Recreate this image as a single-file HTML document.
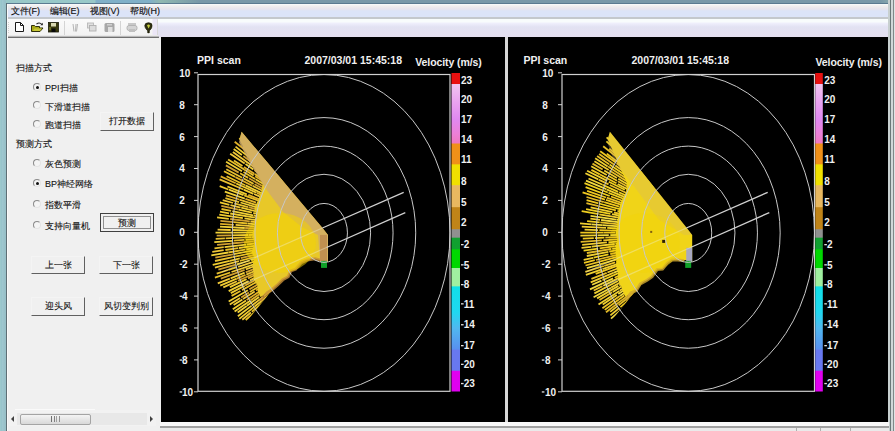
<!DOCTYPE html>
<html><head><meta charset="utf-8"><style>
*{box-sizing:border-box}
body{margin:0;width:895px;height:431px;overflow:hidden;background:#f0f0f0;font-family:"Liberation Sans",sans-serif;position:relative}
.a{position:absolute}
.m{position:absolute;top:6px;font-size:9px;color:#101010;-webkit-text-stroke:0.15px #101010;line-height:11px;white-space:nowrap}
.lbl{position:absolute;font-size:9px;color:#101010;-webkit-text-stroke:0.1px #101010;line-height:10px;white-space:nowrap}
.rad{position:absolute;width:8px;height:8px;border-radius:50%;border:1px solid;border-color:#8a8a8a #e4e4e4 #e4e4e4 #8a8a8a;background:#f4f4f4}
.rad.on::after{content:"";position:absolute;left:1.5px;top:1.5px;width:3px;height:3px;background:#101010;border-radius:50%}
.btn{position:absolute;font-size:9px;color:#101010;-webkit-text-stroke:0.1px #101010;line-height:17px;text-align:center;white-space:nowrap;border-right:1.5px solid #606060;border-bottom:1.5px solid #606060;border-top:1px solid #f4f4f4;border-left:1px solid #f4f4f4;background:#f0f0f0}
svg text.t{font-family:"Liberation Sans",sans-serif;font-size:10px;font-weight:bold;fill:#f0f0f0}
svg text.h{font-family:"Liberation Sans",sans-serif;font-size:10.5px;font-weight:bold;fill:#f0f0f0}
</style></head><body>
<!-- frame top -->
<div class="a" style="left:0;top:0;width:895px;height:4px;background:linear-gradient(90deg,#98c8c8 0,#98c8c8 95px,#80b0c8 96px,#80b0c8 150px,#90b8b0 160px,#7898a8 200px,#7898a8 880px,#90b0b0 895px)"></div>
<div class="a" style="left:0;top:3px;width:895px;height:1px;background:#5a7a90"></div>
<!-- menu bar -->
<div class="a" style="left:6px;top:4px;width:883px;height:13px;background:linear-gradient(#f8fcfc 0,#f0eeee 2px,#e6e4ec 5px,#dce4f8 7px,#dce4f8 13px)"></div>
<div class="a" style="left:6px;top:17px;width:883px;height:2px;background:#c4c8cc"></div>
<!-- rebar -->
<div class="a" style="left:6px;top:19px;width:883px;height:18px;background:linear-gradient(#f8fcfc 0,#f8fcfc 3px,#f0f0fc 4px,#e2e2f2 8px,#e4e0f0 17px)"></div>
<div class="m" style="left:10.5px">文件(F)</div>
<div class="m" style="left:49.5px">编辑(E)</div>
<div class="m" style="left:89.5px">视图(V)</div>
<div class="m" style="left:129.5px">帮助(H)</div>
<!-- toolbar -->
<div class="a" style="left:6px;top:19px;width:152px;height:17px;background:linear-gradient(#fafafa,#f2f2f2);border-right:1px solid #d8d8d8"></div>
<svg class="a" style="left:6px;top:19px" width="153" height="18">
<line x1="2.5" y1="3" x2="2.5" y2="14" stroke="#d0d0d0" stroke-dasharray="1,1"/>
<path d="M9.5,3.5 h5 l3,3 v6 h-8z" fill="#fff" stroke="#181818" stroke-width="1"/>
<path d="M14.5,3.5 v3 h3" fill="none" stroke="#181818" stroke-width="1"/>
<path d="M25.5,6.5 h3 l1,1 h4 v1.5 h3.5 l-3,3.5 h-8.5z" fill="#a8a818" stroke="#30300c" stroke-width="1"/>
<path d="M28.5,9.5 h7.5 l-2.2,2.5 h-7z" fill="#c8c838" stroke="none"/>
<path d="M30.5,5 q3,-2.2 5.5,0.5" fill="none" stroke="#202020" stroke-width="1.1"/><path d="M36.8,3.8 v2.5 h-2.5z" fill="#202020"/>
<rect x="42.5" y="3.5" width="10" height="9.5" fill="#38380c" stroke="#1a1a08" stroke-width="0.8"/>
<rect x="45" y="4" width="5" height="3.5" fill="#d8d8b0"/>
<rect x="45.5" y="9.5" width="4" height="3.5" fill="#080808"/>
<rect x="43.5" y="8" width="1" height="3" fill="#98a040"/>
<line x1="58.5" y1="2" x2="58.5" y2="16" stroke="#d4d4d4"/>
<path d="M67,5 l1,7.5 M70,5 l-0.5,7.5 M71.5,5 l-1,7.5" stroke="#b4b4b4" stroke-width="1"/>
<rect x="81.5" y="4" width="6" height="5" fill="#e0e0e0" stroke="#b8b8b8" stroke-width="0.9"/><rect x="83.5" y="6.5" width="6.5" height="5.5" fill="#dcdcdc" stroke="#b0b0b0" stroke-width="0.9"/>
<rect x="98.5" y="4" width="10" height="9" rx="1.5" fill="#a8a8a8"/><rect x="101" y="5" width="5" height="1.5" fill="#d0d0d0"/><rect x="102" y="8" width="4.5" height="5" fill="#e0e0e0"/>
<line x1="114.5" y1="2" x2="114.5" y2="16" stroke="#d4d4d4"/>
<rect x="122" y="4" width="8" height="2.5" fill="#c8c8c8"/><rect x="121" y="6.5" width="10" height="5" rx="2" fill="#d4d4d4" stroke="#b0b0b0" stroke-width="0.9"/><rect x="123" y="10" width="6" height="3" fill="#c0c0c0"/>
<path d="M138.8,6.8 q0,-3 3.7,-3 q3.8,0 3.8,3 q0,1.8 -2.6,4.6 h-2.4 q-2.5,-2.8 -2.5,-4.6z" fill="#303010" stroke="#1c1c08" stroke-width="0.8"/>
<path d="M141,6.2 q1.5,-1.2 3,0 q0,1 -1.5,3.2z" fill="#c8d040"/>
<circle cx="142.5" cy="12.9" r="1.3" fill="#202008"/>
<rect x="146.5" y="0" width="5" height="17" fill="#ebe6f6"/>
<line x1="151.5" y1="1" x2="151.5" y2="17" stroke="#d8d8d8"/>
</svg>
<div class="a" style="left:6px;top:35px;width:152px;height:1px;background:#e8e8e8"></div><div class="a" style="left:6px;top:37px;width:153px;height:1px;background:#707070"></div><div class="a" style="left:6px;top:36px;width:153px;height:1px;background:#b8b8b8"></div>
<!-- left frame -->
<div class="a" style="left:0;top:0;width:6px;height:431px;background:linear-gradient(90deg,#a8d0d0 0,#90c0c8 1px,#a0c8d0 2px,#98c0c8 5px)"></div>
<div class="a" style="left:5.5px;top:3px;width:1.3px;height:428px;background:#5e6e74"></div>
<div class="a" style="left:7px;top:4px;width:1px;height:427px;background:#fafafa"></div>
<!-- right frame -->
<div class="a" style="left:888px;top:0;width:7px;height:431px;background:linear-gradient(90deg,#c8d0d0 0,#c8d0d0 2px,#6a7878 2px,#6a7878 3px,#d0d8d8 3px,#d0d8d8 5px,#808888 5px,#808888 6px,#e0e4e4 6px)"></div>
<!-- left panel -->
<div class="lbl" style="left:16px;top:63px">扫描方式</div>
<div class="rad on" style="left:33px;top:83px"></div><div class="lbl" style="left:45px;top:83px">PPI扫描</div>
<div class="rad" style="left:33px;top:101px"></div><div class="lbl" style="left:45px;top:102px">下滑道扫描</div>
<div class="rad" style="left:33px;top:120px"></div><div class="lbl" style="left:45px;top:120px">跑道扫描</div>
<div class="btn" style="left:100px;top:112px;width:54px;height:19px">打开数据</div>
<div class="lbl" style="left:16px;top:139px">预测方式</div>
<div class="rad" style="left:33px;top:159px"></div><div class="lbl" style="left:45px;top:159px">灰色预测</div>
<div class="rad on" style="left:33px;top:179px"></div><div class="lbl" style="left:45px;top:179px">BP神经网络</div>
<div class="rad" style="left:33px;top:200px"></div><div class="lbl" style="left:45px;top:200px">指数平滑</div>
<div class="rad" style="left:33px;top:221px"></div><div class="lbl" style="left:45px;top:221px">支持向量机</div>
<div class="a" style="left:99.5px;top:213px;width:54px;height:19px;border:1px solid #404040;background:#f0f0f0"></div>
<div class="a" style="left:103px;top:216px;width:48px;height:13px;border:1px solid #909090"></div>
<div class="lbl" style="left:99.5px;top:218px;width:54px;text-align:center">预测</div>
<div class="btn" style="left:31px;top:256px;width:54px;height:18px">上一张</div>
<div class="btn" style="left:99px;top:256px;width:54px;height:18px">下一张</div>
<div class="btn" style="left:31px;top:297px;width:54px;height:19px">迎头风</div>
<div class="btn" style="left:99px;top:297px;width:54px;height:19px">风切变判别</div>
<!-- scrollbar -->
<div class="a" style="left:9px;top:410px;width:147px;height:16px;background:#f2f2f2"></div>
<div class="a" style="left:15px;top:409px;width:80px;height:1px;background:#fafafa"></div>
<div class="a" style="left:17px;top:413px;width:130px;height:12px;background:#e8e8e8"></div>
<div class="a" style="left:20px;top:414px;width:71px;height:11px;border:1px solid #a4a4a4;border-radius:2px;background:linear-gradient(#f4f4f4,#d8d8d8)"></div>
<div class="a" style="left:51px;top:416px;width:9px;height:6px;border-left:1px solid #707070;border-right:1px solid #909090"></div>
<div class="a" style="left:54px;top:416px;width:3px;height:6px;border-left:1px solid #808080;border-right:1px solid #a0a0a0"></div>
<div class="a" style="left:11px;top:416px;width:0;height:0;border-top:3px solid transparent;border-bottom:3px solid transparent;border-right:3px solid #404040"></div>
<div class="a" style="left:150px;top:416px;width:0;height:0;border-top:3px solid transparent;border-bottom:3px solid transparent;border-left:3px solid #404040"></div>
<!-- black panels -->
<div class="a" style="left:161px;top:37px;width:344px;height:385px;background:#000"></div>
<div class="a" style="left:505px;top:37px;width:3px;height:385px;background:#d8d8d8"></div>
<div class="a" style="left:508px;top:37px;width:380px;height:385px;background:#000"></div>
<!-- bottom status -->
<div class="a" style="left:160px;top:422px;width:729px;height:5px;background:#f8f8f8"></div>
<div class="a" style="left:160px;top:426px;width:729px;height:2px;background:#a0a0a0"></div>
<div class="a" style="left:160px;top:428px;width:729px;height:3px;background:#eaeaea"></div>
<div class="a" style="left:796px;top:428px;width:1px;height:3px;background:#b0b0b0"></div>
<div class="a" style="left:820px;top:428px;width:1px;height:3px;background:#b0b0b0"></div>
<div class="a" style="left:850px;top:428px;width:1px;height:3px;background:#b0b0b0"></div>
<svg class="a" style="left:0;top:0" width="895" height="431">
<defs>
<linearGradient id="cb" x1="0" y1="73" x2="0" y2="392" gradientUnits="userSpaceOnUse">
<stop offset="0" stop-color="#e81010"/><stop offset="0.034" stop-color="#e81010"/>
<stop offset="0.036" stop-color="#f0c4f0"/><stop offset="0.09" stop-color="#eaa4f0"/><stop offset="0.145" stop-color="#e088f0"/><stop offset="0.19" stop-color="#ec80d8"/><stop offset="0.22" stop-color="#f078c0"/>
<stop offset="0.222" stop-color="#f09018"/><stop offset="0.2855" stop-color="#f09018"/>
<stop offset="0.2875" stop-color="#f0e000"/><stop offset="0.351" stop-color="#f0e000"/>
<stop offset="0.353" stop-color="#e8b860"/><stop offset="0.42" stop-color="#e8b860"/>
<stop offset="0.422" stop-color="#c08418"/><stop offset="0.489" stop-color="#c08418"/>
<stop offset="0.491" stop-color="#909090"/><stop offset="0.515" stop-color="#909090"/>
<stop offset="0.517" stop-color="#10a030"/><stop offset="0.552" stop-color="#10a030"/>
<stop offset="0.554" stop-color="#00d800"/><stop offset="0.61" stop-color="#00d800"/>
<stop offset="0.612" stop-color="#a0f0a0"/><stop offset="0.668" stop-color="#a0f0a0"/>
<stop offset="0.670" stop-color="#10e0e8"/><stop offset="0.75" stop-color="#20d8f0"/>
<stop offset="0.80" stop-color="#50b8f0"/><stop offset="0.866" stop-color="#5890f0"/><stop offset="0.868" stop-color="#6878f0"/><stop offset="0.932" stop-color="#6878f0"/>
<stop offset="0.934" stop-color="#e000f0"/><stop offset="1" stop-color="#e000f0"/>
</linearGradient>
<radialGradient id="wga" cx="324" cy="234" r="120" gradientUnits="userSpaceOnUse">
<stop offset="0" stop-color="#e8c040"/><stop offset="0.35" stop-color="#f0d020"/><stop offset="0.7" stop-color="#e8c030"/><stop offset="1" stop-color="#d8a838"/>
</radialGradient>
<radialGradient id="wgb" cx="688" cy="234" r="120" gradientUnits="userSpaceOnUse">
<stop offset="0" stop-color="#f0d020"/><stop offset="0.4" stop-color="#f0d818"/><stop offset="0.7" stop-color="#f0d030"/><stop offset="1" stop-color="#e0b830"/>
</radialGradient>
</defs>
<clipPath id="wca"><path d="M322.0,226.9 L241.3,132.1 L239.1,128.8 L236.2,132.5 L233.4,136.3 L230.7,140.2 L228.4,144.6 L226.9,149.6 L225.6,154.7 L224.2,159.6 L221.7,163.7 L219.4,167.9 L217.1,172.2 L215.5,177.0 L216.9,183.1 L218.4,189.0 L219.1,194.3 L217.9,198.9 L216.9,203.6 L216.1,208.2 L215.3,213.0 L214.7,217.7 L213.7,222.5 L212.2,227.3 L210.9,232.2 L209.8,237.2 L208.8,242.3 L208.5,247.4 L208.4,252.5 L208.5,257.7 L208.7,262.9 L209.8,267.9 L211.0,272.8 L212.3,277.7 L214.2,282.3 L216.8,286.6 L219.4,290.6 L222.2,294.5 L224.8,298.4 L226.5,302.8 L228.3,307.2 L230.2,311.6 L232.2,315.9 L234.3,320.1 L237.0,323.7 L241.6,325.2 L242.3,327.1 L267.4,295.9 L285.7,274.0 L305.8,259.2 L329.0,261.9Z"/></clipPath><g clip-path="url(#wca)">
<line x1="245.7" y1="320.0" x2="261.4" y2="306.4" stroke="#e8c028" stroke-width="1.8"/>
<line x1="262.5" y1="305.5" x2="270.6" y2="298.5" stroke="#e8c030" stroke-width="1.8"/>
<line x1="270.7" y1="298.4" x2="284.4" y2="286.6" stroke="#e8c028" stroke-width="1.8"/>
<line x1="284.5" y1="286.5" x2="291.1" y2="280.8" stroke="#f0c838" stroke-width="1.8"/>
<line x1="242.3" y1="319.7" x2="250.9" y2="312.5" stroke="#f0c838" stroke-width="1.8"/>
<line x1="251.8" y1="311.8" x2="266.8" y2="299.4" stroke="#e8c028" stroke-width="1.8"/>
<line x1="267.6" y1="298.7" x2="280.0" y2="288.4" stroke="#f0c838" stroke-width="1.8"/>
<line x1="280.1" y1="288.3" x2="288.4" y2="281.4" stroke="#e0b028" stroke-width="1.8"/>
<line x1="239.3" y1="318.9" x2="254.2" y2="306.9" stroke="#f0cc30" stroke-width="1.8"/>
<line x1="254.4" y1="306.7" x2="269.6" y2="294.6" stroke="#f0cc30" stroke-width="1.8"/>
<line x1="269.9" y1="294.4" x2="278.3" y2="287.7" stroke="#f0cc30" stroke-width="1.8"/>
<line x1="278.4" y1="287.6" x2="286.2" y2="281.4" stroke="#f0c838" stroke-width="1.8"/>
<line x1="237.9" y1="316.2" x2="251.7" y2="305.6" stroke="#f0d038" stroke-width="1.8"/>
<line x1="252.2" y1="305.3" x2="262.9" y2="297.1" stroke="#f0c838" stroke-width="1.8"/>
<line x1="263.9" y1="296.3" x2="274.6" y2="288.1" stroke="#e8c030" stroke-width="1.8"/>
<line x1="275.0" y1="287.8" x2="285.6" y2="279.7" stroke="#e0b028" stroke-width="1.8"/>
<line x1="237.7" y1="312.6" x2="246.7" y2="306.0" stroke="#f0d038" stroke-width="1.8"/>
<line x1="246.9" y1="305.8" x2="259.1" y2="296.9" stroke="#f0d038" stroke-width="1.8"/>
<line x1="259.7" y1="296.4" x2="280.9" y2="280.8" stroke="#e8c028" stroke-width="1.8"/>
<line x1="282.0" y1="280.0" x2="286.0" y2="277.1" stroke="#d0a030" stroke-width="1.8"/>
<line x1="234.6" y1="311.6" x2="250.5" y2="300.4" stroke="#f0d038" stroke-width="1.8"/>
<line x1="250.6" y1="300.3" x2="259.4" y2="294.2" stroke="#e0b028" stroke-width="1.8"/>
<line x1="260.0" y1="293.7" x2="277.2" y2="281.6" stroke="#e8c028" stroke-width="1.8"/>
<line x1="278.3" y1="280.8" x2="283.7" y2="277.0" stroke="#e8c030" stroke-width="1.8"/>
<line x1="232.8" y1="309.3" x2="246.0" y2="300.4" stroke="#f0cc30" stroke-width="1.8"/>
<line x1="246.6" y1="300.1" x2="268.1" y2="285.6" stroke="#e0b028" stroke-width="1.8"/>
<line x1="268.3" y1="285.4" x2="277.5" y2="279.2" stroke="#e8c028" stroke-width="1.8"/>
<line x1="277.8" y1="279.0" x2="282.6" y2="275.8" stroke="#f0cc30" stroke-width="1.8"/>
<line x1="233.6" y1="305.0" x2="242.4" y2="299.4" stroke="#f0d038" stroke-width="1.8"/>
<line x1="243.0" y1="299.0" x2="254.7" y2="291.4" stroke="#f0c838" stroke-width="1.8"/>
<line x1="256.0" y1="290.6" x2="276.6" y2="277.3" stroke="#e0b028" stroke-width="1.8"/>
<line x1="277.7" y1="276.6" x2="284.0" y2="272.5" stroke="#f0cc30" stroke-width="1.8"/>
<line x1="229.8" y1="304.4" x2="240.1" y2="298.0" stroke="#f0c838" stroke-width="1.8"/>
<line x1="241.2" y1="297.4" x2="249.0" y2="292.5" stroke="#d0a030" stroke-width="1.8"/>
<line x1="249.9" y1="292.0" x2="261.6" y2="284.8" stroke="#e8c028" stroke-width="1.8"/>
<line x1="261.8" y1="284.6" x2="277.7" y2="274.9" stroke="#e8c030" stroke-width="1.8"/>
<line x1="278.6" y1="274.3" x2="280.9" y2="272.9" stroke="#f0cc30" stroke-width="1.8"/>
<line x1="228.7" y1="301.5" x2="247.9" y2="290.2" stroke="#f0d038" stroke-width="1.8"/>
<line x1="249.3" y1="289.4" x2="269.2" y2="277.8" stroke="#d0a030" stroke-width="1.8"/>
<line x1="270.3" y1="277.1" x2="280.4" y2="271.2" stroke="#f0d038" stroke-width="1.8"/>
<line x1="231.6" y1="295.9" x2="240.5" y2="291.0" stroke="#e8c028" stroke-width="1.8"/>
<line x1="242.0" y1="290.1" x2="256.8" y2="281.9" stroke="#e8c028" stroke-width="1.8"/>
<line x1="257.4" y1="281.6" x2="266.0" y2="276.7" stroke="#e8c028" stroke-width="1.8"/>
<line x1="266.9" y1="276.2" x2="283.2" y2="267.2" stroke="#e0b028" stroke-width="1.8"/>
<line x1="230.8" y1="293.1" x2="244.7" y2="285.7" stroke="#f0cc30" stroke-width="1.8"/>
<line x1="245.1" y1="285.5" x2="258.6" y2="278.4" stroke="#e0b028" stroke-width="1.8"/>
<line x1="259.3" y1="278.0" x2="269.1" y2="272.8" stroke="#f0d038" stroke-width="1.8"/>
<line x1="270.7" y1="272.0" x2="283.8" y2="265.0" stroke="#f0d038" stroke-width="1.8"/>
<line x1="228.7" y1="291.1" x2="248.6" y2="281.1" stroke="#f0d038" stroke-width="1.8"/>
<line x1="249.9" y1="280.4" x2="260.6" y2="275.0" stroke="#e8c028" stroke-width="1.8"/>
<line x1="260.9" y1="274.9" x2="282.3" y2="264.1" stroke="#e0b028" stroke-width="1.8"/>
<line x1="229.9" y1="287.1" x2="246.6" y2="279.1" stroke="#f0cc30" stroke-width="1.8"/>
<line x1="248.0" y1="278.4" x2="267.5" y2="269.2" stroke="#e0b028" stroke-width="1.8"/>
<line x1="268.3" y1="268.8" x2="284.1" y2="261.3" stroke="#e0b028" stroke-width="1.8"/>
<line x1="223.3" y1="287.4" x2="236.9" y2="281.3" stroke="#f0c838" stroke-width="1.8"/>
<line x1="237.9" y1="280.8" x2="259.1" y2="271.4" stroke="#d0a030" stroke-width="1.8"/>
<line x1="260.5" y1="270.7" x2="278.1" y2="262.8" stroke="#d0a030" stroke-width="1.8"/>
<line x1="220.2" y1="285.6" x2="236.7" y2="278.6" stroke="#f0cc30" stroke-width="1.8"/>
<line x1="236.8" y1="278.6" x2="245.5" y2="274.9" stroke="#e0b028" stroke-width="1.8"/>
<line x1="246.3" y1="274.6" x2="257.8" y2="269.7" stroke="#e8c030" stroke-width="1.8"/>
<line x1="259.4" y1="269.1" x2="275.1" y2="262.4" stroke="#f0cc30" stroke-width="1.8"/>
<line x1="217.8" y1="283.3" x2="229.9" y2="278.6" stroke="#f0c838" stroke-width="1.8"/>
<line x1="230.6" y1="278.3" x2="244.7" y2="272.7" stroke="#f0d038" stroke-width="1.8"/>
<line x1="245.7" y1="272.3" x2="269.1" y2="263.0" stroke="#d0a030" stroke-width="1.8"/>
<line x1="269.2" y1="263.0" x2="273.6" y2="261.3" stroke="#e0b028" stroke-width="1.8"/>
<line x1="220.8" y1="278.6" x2="244.6" y2="269.8" stroke="#d0a030" stroke-width="1.8"/>
<line x1="245.8" y1="269.3" x2="257.7" y2="265.0" stroke="#f0c838" stroke-width="1.8"/>
<line x1="258.4" y1="264.7" x2="277.1" y2="257.8" stroke="#e8c028" stroke-width="1.8"/>
<line x1="214.9" y1="277.7" x2="230.2" y2="272.5" stroke="#e8c028" stroke-width="1.8"/>
<line x1="231.5" y1="272.0" x2="242.9" y2="268.1" stroke="#f0c838" stroke-width="1.8"/>
<line x1="242.9" y1="268.1" x2="261.5" y2="261.7" stroke="#f0d038" stroke-width="1.8"/>
<line x1="262.8" y1="261.2" x2="271.6" y2="258.2" stroke="#d0a030" stroke-width="1.8"/>
<line x1="216.7" y1="273.6" x2="228.0" y2="270.0" stroke="#e8c030" stroke-width="1.8"/>
<line x1="228.2" y1="270.0" x2="237.0" y2="267.2" stroke="#f0cc30" stroke-width="1.8"/>
<line x1="238.1" y1="266.8" x2="255.7" y2="261.2" stroke="#f0c838" stroke-width="1.8"/>
<line x1="256.5" y1="261.0" x2="273.9" y2="255.4" stroke="#d0a030" stroke-width="1.8"/>
<line x1="218.4" y1="269.7" x2="235.7" y2="264.7" stroke="#d0a030" stroke-width="1.8"/>
<line x1="236.7" y1="264.4" x2="249.8" y2="260.5" stroke="#f0d038" stroke-width="1.8"/>
<line x1="251.2" y1="260.1" x2="260.9" y2="257.3" stroke="#f0cc30" stroke-width="1.8"/>
<line x1="261.5" y1="257.1" x2="276.0" y2="252.8" stroke="#e8c030" stroke-width="1.8"/>
<line x1="214.9" y1="267.6" x2="238.9" y2="261.2" stroke="#f0c838" stroke-width="1.8"/>
<line x1="239.8" y1="260.9" x2="257.6" y2="256.2" stroke="#e8c028" stroke-width="1.8"/>
<line x1="259.1" y1="255.7" x2="272.9" y2="252.1" stroke="#e8c030" stroke-width="1.8"/>
<line x1="212.7" y1="264.9" x2="229.7" y2="260.8" stroke="#f0cc30" stroke-width="1.8"/>
<line x1="229.9" y1="260.8" x2="239.8" y2="258.4" stroke="#f0cc30" stroke-width="1.8"/>
<line x1="240.7" y1="258.2" x2="259.1" y2="253.7" stroke="#d0a030" stroke-width="1.8"/>
<line x1="260.5" y1="253.3" x2="271.0" y2="250.8" stroke="#e8c028" stroke-width="1.8"/>
<line x1="215.0" y1="261.0" x2="232.7" y2="257.2" stroke="#e8c030" stroke-width="1.8"/>
<line x1="232.8" y1="257.2" x2="257.3" y2="251.8" stroke="#e8c028" stroke-width="1.8"/>
<line x1="258.1" y1="251.6" x2="273.6" y2="248.2" stroke="#e8c030" stroke-width="1.8"/>
<line x1="215.3" y1="257.7" x2="233.1" y2="254.3" stroke="#d0a030" stroke-width="1.8"/>
<line x1="233.9" y1="254.1" x2="259.4" y2="249.2" stroke="#f0cc30" stroke-width="1.8"/>
<line x1="260.3" y1="249.0" x2="274.2" y2="246.4" stroke="#e0b028" stroke-width="1.8"/>
<line x1="211.3" y1="255.3" x2="228.1" y2="252.5" stroke="#f0d038" stroke-width="1.8"/>
<line x1="228.3" y1="252.5" x2="245.1" y2="249.6" stroke="#e8c028" stroke-width="1.8"/>
<line x1="246.3" y1="249.4" x2="262.7" y2="246.7" stroke="#f0c838" stroke-width="1.8"/>
<line x1="263.9" y1="246.5" x2="270.5" y2="245.4" stroke="#d0a030" stroke-width="1.8"/>
<line x1="212.3" y1="251.9" x2="223.7" y2="250.2" stroke="#f0c838" stroke-width="1.8"/>
<line x1="225.4" y1="250.0" x2="238.3" y2="248.1" stroke="#e8c028" stroke-width="1.8"/>
<line x1="239.0" y1="248.0" x2="256.6" y2="245.5" stroke="#f0cc30" stroke-width="1.8"/>
<line x1="258.0" y1="245.3" x2="269.8" y2="243.6" stroke="#f0d038" stroke-width="1.8"/>
<line x1="271.6" y1="243.3" x2="271.6" y2="243.3" stroke="#f0d038" stroke-width="1.8"/>
<line x1="214.5" y1="248.3" x2="223.8" y2="247.2" stroke="#e8c030" stroke-width="1.8"/>
<line x1="224.6" y1="247.1" x2="246.1" y2="244.6" stroke="#f0d038" stroke-width="1.8"/>
<line x1="246.7" y1="244.5" x2="266.8" y2="242.1" stroke="#e8c030" stroke-width="1.8"/>
<line x1="268.5" y1="241.9" x2="274.1" y2="241.2" stroke="#d0a030" stroke-width="1.8"/>
<line x1="217.1" y1="244.9" x2="230.9" y2="243.6" stroke="#d0a030" stroke-width="1.8"/>
<line x1="231.2" y1="243.5" x2="253.7" y2="241.4" stroke="#d0a030" stroke-width="1.8"/>
<line x1="254.5" y1="241.3" x2="276.8" y2="239.2" stroke="#d0a030" stroke-width="1.8"/>
<line x1="214.3" y1="242.1" x2="232.5" y2="240.8" stroke="#f0d038" stroke-width="1.8"/>
<line x1="233.8" y1="240.7" x2="244.4" y2="239.9" stroke="#e8c028" stroke-width="1.8"/>
<line x1="245.8" y1="239.8" x2="258.1" y2="239.0" stroke="#e8c028" stroke-width="1.8"/>
<line x1="258.6" y1="238.9" x2="267.8" y2="238.3" stroke="#e8c028" stroke-width="1.8"/>
<line x1="269.3" y1="238.2" x2="274.2" y2="237.8" stroke="#d0a030" stroke-width="1.8"/>
<line x1="215.7" y1="238.8" x2="224.9" y2="238.4" stroke="#e8c030" stroke-width="1.8"/>
<line x1="225.6" y1="238.4" x2="251.1" y2="237.2" stroke="#e8c030" stroke-width="1.8"/>
<line x1="251.3" y1="237.2" x2="269.8" y2="236.3" stroke="#f0c838" stroke-width="1.8"/>
<line x1="271.5" y1="236.2" x2="275.6" y2="236.0" stroke="#e0b028" stroke-width="1.8"/>
<line x1="216.7" y1="235.7" x2="231.2" y2="235.4" stroke="#d0a030" stroke-width="1.8"/>
<line x1="231.6" y1="235.4" x2="248.6" y2="235.0" stroke="#f0cc30" stroke-width="1.8"/>
<line x1="248.9" y1="235.0" x2="264.1" y2="234.7" stroke="#e8c028" stroke-width="1.8"/>
<line x1="265.9" y1="234.6" x2="275.6" y2="234.4" stroke="#e8c028" stroke-width="1.8"/>
<line x1="215.5" y1="232.7" x2="233.0" y2="232.7" stroke="#f0d038" stroke-width="1.8"/>
<line x1="233.2" y1="232.7" x2="257.0" y2="232.7" stroke="#f0d038" stroke-width="1.8"/>
<line x1="258.1" y1="232.7" x2="275.5" y2="232.8" stroke="#f0d038" stroke-width="1.8"/>
<line x1="217.6" y1="229.6" x2="230.7" y2="230.0" stroke="#f0c838" stroke-width="1.8"/>
<line x1="232.2" y1="230.0" x2="253.9" y2="230.6" stroke="#f0cc30" stroke-width="1.8"/>
<line x1="254.2" y1="230.6" x2="277.6" y2="231.2" stroke="#e8c028" stroke-width="1.8"/>
<line x1="220.0" y1="226.7" x2="244.8" y2="228.0" stroke="#f0d038" stroke-width="1.8"/>
<line x1="245.1" y1="228.0" x2="255.6" y2="228.5" stroke="#d0a030" stroke-width="1.8"/>
<line x1="256.3" y1="228.6" x2="274.4" y2="229.5" stroke="#e0b028" stroke-width="1.8"/>
<line x1="275.5" y1="229.5" x2="279.9" y2="229.8" stroke="#e8c028" stroke-width="1.8"/>
<line x1="220.1" y1="223.8" x2="233.8" y2="224.8" stroke="#e0b028" stroke-width="1.8"/>
<line x1="235.6" y1="224.9" x2="254.3" y2="226.3" stroke="#f0c838" stroke-width="1.8"/>
<line x1="254.4" y1="226.3" x2="279.2" y2="228.2" stroke="#f0c838" stroke-width="1.8"/>
<line x1="279.9" y1="228.2" x2="279.9" y2="228.2" stroke="#f0d038" stroke-width="1.8"/>
<line x1="220.4" y1="220.8" x2="233.8" y2="222.1" stroke="#d0a030" stroke-width="1.8"/>
<line x1="233.8" y1="222.1" x2="247.5" y2="223.5" stroke="#e8c028" stroke-width="1.8"/>
<line x1="247.7" y1="223.5" x2="267.2" y2="225.5" stroke="#f0d038" stroke-width="1.8"/>
<line x1="267.2" y1="225.5" x2="280.1" y2="226.7" stroke="#f0c838" stroke-width="1.8"/>
<line x1="217.1" y1="217.4" x2="228.8" y2="218.8" stroke="#f0cc30" stroke-width="1.8"/>
<line x1="230.2" y1="219.0" x2="249.8" y2="221.4" stroke="#d0a030" stroke-width="1.8"/>
<line x1="250.4" y1="221.5" x2="276.7" y2="224.7" stroke="#f0c838" stroke-width="1.8"/>
<line x1="219.3" y1="214.6" x2="242.9" y2="218.1" stroke="#f0cc30" stroke-width="1.8"/>
<line x1="244.5" y1="218.4" x2="264.5" y2="221.3" stroke="#f0cc30" stroke-width="1.8"/>
<line x1="265.8" y1="221.5" x2="278.6" y2="223.4" stroke="#e8c030" stroke-width="1.8"/>
<line x1="220.0" y1="211.7" x2="229.1" y2="213.3" stroke="#f0cc30" stroke-width="1.8"/>
<line x1="230.2" y1="213.5" x2="254.9" y2="217.7" stroke="#f0cc30" stroke-width="1.8"/>
<line x1="256.6" y1="218.0" x2="276.9" y2="221.5" stroke="#e8c028" stroke-width="1.8"/>
<line x1="276.9" y1="221.5" x2="279.1" y2="221.9" stroke="#e0b028" stroke-width="1.8"/>
<line x1="221.5" y1="209.0" x2="231.2" y2="210.9" stroke="#e8c028" stroke-width="1.8"/>
<line x1="232.3" y1="211.2" x2="253.2" y2="215.3" stroke="#f0d038" stroke-width="1.8"/>
<line x1="253.6" y1="215.4" x2="270.5" y2="218.7" stroke="#e8c028" stroke-width="1.8"/>
<line x1="271.9" y1="218.9" x2="280.4" y2="220.6" stroke="#e8c030" stroke-width="1.8"/>
<line x1="221.3" y1="205.9" x2="238.4" y2="209.7" stroke="#d0a030" stroke-width="1.8"/>
<line x1="238.5" y1="209.7" x2="251.9" y2="212.7" stroke="#f0cc30" stroke-width="1.8"/>
<line x1="253.3" y1="213.0" x2="266.1" y2="215.9" stroke="#f0cc30" stroke-width="1.8"/>
<line x1="267.8" y1="216.2" x2="279.8" y2="218.9" stroke="#f0d038" stroke-width="1.8"/>
<line x1="219.9" y1="202.4" x2="229.4" y2="204.8" stroke="#f0cc30" stroke-width="1.8"/>
<line x1="230.5" y1="205.1" x2="240.6" y2="207.6" stroke="#f0c838" stroke-width="1.8"/>
<line x1="241.2" y1="207.7" x2="261.3" y2="212.7" stroke="#f0cc30" stroke-width="1.8"/>
<line x1="261.9" y1="212.8" x2="278.1" y2="216.8" stroke="#e8c028" stroke-width="1.8"/>
<line x1="222.7" y1="200.2" x2="233.1" y2="203.0" stroke="#f0c838" stroke-width="1.8"/>
<line x1="234.3" y1="203.4" x2="248.0" y2="207.1" stroke="#e8c030" stroke-width="1.8"/>
<line x1="248.5" y1="207.2" x2="265.3" y2="211.8" stroke="#d0a030" stroke-width="1.8"/>
<line x1="265.5" y1="211.8" x2="280.6" y2="215.9" stroke="#f0c838" stroke-width="1.8"/>
<line x1="225.4" y1="198.1" x2="239.1" y2="202.1" stroke="#e8c028" stroke-width="1.8"/>
<line x1="240.5" y1="202.5" x2="265.8" y2="210.1" stroke="#f0d038" stroke-width="1.8"/>
<line x1="267.5" y1="210.6" x2="282.8" y2="215.1" stroke="#f0c838" stroke-width="1.8"/>
<line x1="226.1" y1="195.3" x2="239.2" y2="199.5" stroke="#e0b028" stroke-width="1.8"/>
<line x1="239.4" y1="199.6" x2="262.0" y2="206.9" stroke="#e8c030" stroke-width="1.8"/>
<line x1="262.5" y1="207.0" x2="273.0" y2="210.4" stroke="#e0b028" stroke-width="1.8"/>
<line x1="273.4" y1="210.5" x2="283.2" y2="213.7" stroke="#f0d038" stroke-width="1.8"/>
<line x1="224.8" y1="191.6" x2="244.8" y2="198.6" stroke="#f0d038" stroke-width="1.8"/>
<line x1="245.4" y1="198.8" x2="256.2" y2="202.6" stroke="#e0b028" stroke-width="1.8"/>
<line x1="256.9" y1="202.8" x2="267.4" y2="206.5" stroke="#e0b028" stroke-width="1.8"/>
<line x1="267.4" y1="206.5" x2="281.4" y2="211.4" stroke="#d0a030" stroke-width="1.8"/>
<line x1="219.7" y1="186.2" x2="228.4" y2="189.5" stroke="#f0cc30" stroke-width="1.8"/>
<line x1="228.9" y1="189.6" x2="243.6" y2="195.1" stroke="#f0d038" stroke-width="1.8"/>
<line x1="244.2" y1="195.4" x2="267.3" y2="204.0" stroke="#e8c028" stroke-width="1.8"/>
<line x1="267.9" y1="204.2" x2="275.9" y2="207.2" stroke="#e0b028" stroke-width="1.8"/>
<line x1="227.4" y1="186.5" x2="246.8" y2="194.3" stroke="#f0cc30" stroke-width="1.8"/>
<line x1="248.3" y1="194.9" x2="260.9" y2="199.9" stroke="#e0b028" stroke-width="1.8"/>
<line x1="261.6" y1="200.2" x2="275.2" y2="205.6" stroke="#d0a030" stroke-width="1.8"/>
<line x1="275.9" y1="205.9" x2="283.1" y2="208.8" stroke="#e8c028" stroke-width="1.8"/>
<line x1="219.6" y1="179.4" x2="243.5" y2="189.5" stroke="#e8c030" stroke-width="1.8"/>
<line x1="243.8" y1="189.7" x2="253.4" y2="193.8" stroke="#f0cc30" stroke-width="1.8"/>
<line x1="254.1" y1="194.0" x2="272.6" y2="201.9" stroke="#f0c838" stroke-width="1.8"/>
<line x1="273.6" y1="202.4" x2="274.8" y2="202.9" stroke="#e8c028" stroke-width="1.8"/>
<line x1="220.7" y1="176.4" x2="235.7" y2="183.2" stroke="#e0b028" stroke-width="1.8"/>
<line x1="236.2" y1="183.5" x2="256.5" y2="192.7" stroke="#f0cc30" stroke-width="1.8"/>
<line x1="257.0" y1="192.9" x2="275.4" y2="201.2" stroke="#e0b028" stroke-width="1.8"/>
<line x1="226.6" y1="176.3" x2="245.1" y2="185.2" stroke="#e8c028" stroke-width="1.8"/>
<line x1="245.5" y1="185.4" x2="268.3" y2="196.3" stroke="#f0d038" stroke-width="1.8"/>
<line x1="269.2" y1="196.8" x2="280.7" y2="202.3" stroke="#e0b028" stroke-width="1.8"/>
<line x1="224.0" y1="171.3" x2="235.1" y2="176.9" stroke="#e8c028" stroke-width="1.8"/>
<line x1="235.4" y1="177.1" x2="252.3" y2="185.7" stroke="#e0b028" stroke-width="1.8"/>
<line x1="252.7" y1="185.9" x2="264.9" y2="192.0" stroke="#e8c030" stroke-width="1.8"/>
<line x1="265.2" y1="192.2" x2="273.6" y2="196.4" stroke="#d0a030" stroke-width="1.8"/>
<line x1="274.2" y1="196.8" x2="277.5" y2="198.4" stroke="#e8c030" stroke-width="1.8"/>
<line x1="226.3" y1="169.2" x2="242.2" y2="177.7" stroke="#e8c030" stroke-width="1.8"/>
<line x1="243.7" y1="178.5" x2="253.6" y2="183.9" stroke="#e8c030" stroke-width="1.8"/>
<line x1="254.5" y1="184.3" x2="275.0" y2="195.2" stroke="#d0a030" stroke-width="1.8"/>
<line x1="275.3" y1="195.4" x2="279.2" y2="197.5" stroke="#f0c838" stroke-width="1.8"/>
<line x1="225.9" y1="165.4" x2="238.7" y2="172.6" stroke="#d0a030" stroke-width="1.8"/>
<line x1="240.0" y1="173.3" x2="248.2" y2="177.9" stroke="#e8c028" stroke-width="1.8"/>
<line x1="248.9" y1="178.3" x2="268.7" y2="189.5" stroke="#d0a030" stroke-width="1.8"/>
<line x1="269.5" y1="189.9" x2="278.2" y2="194.8" stroke="#e8c028" stroke-width="1.8"/>
<line x1="226.1" y1="161.8" x2="242.0" y2="171.2" stroke="#f0d038" stroke-width="1.8"/>
<line x1="243.5" y1="172.1" x2="255.1" y2="179.0" stroke="#e8c028" stroke-width="1.8"/>
<line x1="255.5" y1="179.2" x2="265.6" y2="185.2" stroke="#f0cc30" stroke-width="1.8"/>
<line x1="265.7" y1="185.3" x2="277.7" y2="192.4" stroke="#f0cc30" stroke-width="1.8"/>
<line x1="228.1" y1="159.6" x2="244.2" y2="169.5" stroke="#e8c028" stroke-width="1.8"/>
<line x1="244.2" y1="169.5" x2="253.7" y2="175.5" stroke="#e8c030" stroke-width="1.8"/>
<line x1="255.1" y1="176.3" x2="272.7" y2="187.2" stroke="#e0b028" stroke-width="1.8"/>
<line x1="274.1" y1="188.1" x2="279.1" y2="191.2" stroke="#e8c030" stroke-width="1.8"/>
<line x1="233.9" y1="160.4" x2="242.5" y2="166.0" stroke="#e8c030" stroke-width="1.8"/>
<line x1="243.9" y1="167.0" x2="254.4" y2="173.7" stroke="#e0b028" stroke-width="1.8"/>
<line x1="254.7" y1="174.0" x2="271.3" y2="184.7" stroke="#e8c028" stroke-width="1.8"/>
<line x1="272.1" y1="185.3" x2="284.2" y2="193.1" stroke="#e0b028" stroke-width="1.8"/>
<line x1="230.2" y1="153.7" x2="244.7" y2="163.5" stroke="#f0c838" stroke-width="1.8"/>
<line x1="245.5" y1="164.1" x2="253.4" y2="169.4" stroke="#f0d038" stroke-width="1.8"/>
<line x1="254.5" y1="170.1" x2="266.5" y2="178.3" stroke="#e8c028" stroke-width="1.8"/>
<line x1="266.8" y1="178.5" x2="279.8" y2="187.4" stroke="#f0cc30" stroke-width="1.8"/>
<line x1="232.9" y1="152.1" x2="253.8" y2="166.9" stroke="#f0c838" stroke-width="1.8"/>
<line x1="254.5" y1="167.4" x2="272.1" y2="179.9" stroke="#f0cc30" stroke-width="1.8"/>
<line x1="272.7" y1="180.3" x2="281.8" y2="186.8" stroke="#f0c838" stroke-width="1.8"/>
<line x1="233.7" y1="148.9" x2="241.9" y2="154.9" stroke="#f0d038" stroke-width="1.8"/>
<line x1="243.3" y1="156.0" x2="255.0" y2="164.7" stroke="#d0a030" stroke-width="1.8"/>
<line x1="255.3" y1="164.9" x2="269.3" y2="175.2" stroke="#e0b028" stroke-width="1.8"/>
<line x1="270.4" y1="176.0" x2="281.9" y2="184.5" stroke="#e8c030" stroke-width="1.8"/>
<line x1="235.5" y1="146.6" x2="248.6" y2="156.7" stroke="#f0cc30" stroke-width="1.8"/>
<line x1="248.7" y1="156.8" x2="264.3" y2="168.8" stroke="#f0d038" stroke-width="1.8"/>
<line x1="264.4" y1="168.9" x2="271.8" y2="174.6" stroke="#e8c030" stroke-width="1.8"/>
<line x1="272.0" y1="174.8" x2="279.9" y2="180.8" stroke="#e8c028" stroke-width="1.8"/>
<line x1="280.2" y1="181.1" x2="283.0" y2="183.3" stroke="#f0cc30" stroke-width="1.8"/>
<line x1="234.7" y1="141.7" x2="254.8" y2="157.8" stroke="#e0b028" stroke-width="1.8"/>
<line x1="255.1" y1="158.0" x2="271.3" y2="171.0" stroke="#e8c030" stroke-width="1.8"/>
<line x1="272.3" y1="171.9" x2="279.8" y2="177.9" stroke="#f0cc30" stroke-width="1.8"/>
<line x1="280.8" y1="178.7" x2="281.5" y2="179.3" stroke="#e0b028" stroke-width="1.8"/>
<line x1="243.4" y1="146.7" x2="251.4" y2="153.4" stroke="#f0d038" stroke-width="1.8"/>
<line x1="252.8" y1="154.5" x2="261.4" y2="161.7" stroke="#d0a030" stroke-width="1.8"/>
<line x1="261.7" y1="161.9" x2="273.5" y2="171.8" stroke="#d0a030" stroke-width="1.8"/>
<line x1="273.9" y1="172.2" x2="289.5" y2="185.2" stroke="#e8c028" stroke-width="1.8"/>
<line x1="239.3" y1="138.1" x2="258.6" y2="154.8" stroke="#f0c838" stroke-width="1.8"/>
<line x1="259.0" y1="155.2" x2="275.8" y2="169.8" stroke="#f0d038" stroke-width="1.8"/>
<line x1="275.9" y1="169.8" x2="284.6" y2="177.4" stroke="#d0a030" stroke-width="1.8"/>
</g>
<path d="M322.5,227.9 L241.6,131.8 L239.4,139.4 L249.8,159.3 L262.7,182.9 L261.5,191.1 L259.4,196.7 L257.2,202.3 L254.5,207.8 L256.0,214.7 L254.6,220.6 L254.6,226.8 L252.4,232.9 L253.5,239.1 L254.1,245.2 L251.4,252.3 L254.6,257.9 L252.4,265.6 L253.4,272.4 L253.8,279.8 L257.4,285.2 L258.1,293.1 L261.3,296.7 L268.0,292.0 L260.3,300.8 L267.3,292.6 L272.0,289.7 L277.6,284.8 L282.8,279.8 L288.2,276.8 L290.9,270.9 L295.5,269.2 L301.4,262.5 L307.0,260.1 L315.1,258.8 L320.9,260.2 L321.0,259.9 L328.0,261.9 L328.0,234.9Z" fill="#e8c828"/>
<path d="M260.3,300.8 L267.3,292.6 L272.0,289.7 L277.6,284.8 L282.8,279.8 L288.2,276.8 L290.9,270.9 L295.5,269.2 L301.4,262.5 L307.0,260.1 L315.1,258.8 L320.9,260.2" fill="none" stroke="#c89038" stroke-width="3" stroke-opacity="0.8"/>
<path d="M322.5,227.9 L241.6,131.8 L239.1,142.3 L248.8,160.9 L264.8,187.6 L283.2,211.9 L301.8,227.0 L318.0,234.9 L320.0,259.9 L328.0,260.9 L328.0,234.9Z" fill="#d0ac68" opacity="0.85"/>
<ellipse cx="280.0" cy="242.9" rx="36" ry="30" fill="#f4d400" opacity="0.5"/>
<rect x="320.0" y="234.9" width="7" height="27" fill="#c09050"/>
<rect x="321.0" y="260.9" width="6" height="7" fill="#10a028"/>
<ellipse cx="324.00" cy="232.90" rx="23.44" ry="29.46" fill="none" stroke="#c8c8c8" stroke-width="1"/>
<ellipse cx="324.00" cy="232.90" rx="46.62" ry="58.61" fill="none" stroke="#c8c8c8" stroke-width="1"/>
<ellipse cx="324.00" cy="232.90" rx="69.05" ry="86.80" fill="none" stroke="#c8c8c8" stroke-width="1"/>
<ellipse cx="324.00" cy="232.90" rx="91.73" ry="115.32" fill="none" stroke="#c8c8c8" stroke-width="1"/>
<ellipse cx="324.00" cy="232.90" rx="126.00" ry="158.40" fill="none" stroke="#c8c8c8" stroke-width="1"/>
<line x1="403.7" y1="192.3" x2="322.4" y2="228.0" stroke="#d0d0d0" stroke-width="1.3"/>
<line x1="322.4" y1="228.0" x2="222.0" y2="272.0" stroke="#f0f0d0" stroke-opacity="0.4" stroke-width="1.3"/>
<line x1="405.3" y1="212.6" x2="326.5" y2="247.5" stroke="#d0d0d0" stroke-width="1.3"/>
<line x1="326.5" y1="247.5" x2="240.0" y2="285.8" stroke="#f0f0d0" stroke-opacity="0.4" stroke-width="1.3"/>
<rect x="198.0" y="74.5" width="252.0" height="316.8" fill="none" stroke="#d0d0d0" stroke-width="1.2"/>
<line x1="194.0" y1="72.8" x2="198.0" y2="72.8" stroke="#d0d0d0" stroke-width="1"/>
<text x="179.2" y="76.7" class="t">10</text>
<line x1="194.0" y1="104.7" x2="198.0" y2="104.7" stroke="#d0d0d0" stroke-width="1"/>
<text x="179.2" y="108.6" class="t">8</text>
<line x1="194.0" y1="136.6" x2="198.0" y2="136.6" stroke="#d0d0d0" stroke-width="1"/>
<text x="179.2" y="140.5" class="t">6</text>
<line x1="194.0" y1="168.5" x2="198.0" y2="168.5" stroke="#d0d0d0" stroke-width="1"/>
<text x="179.2" y="172.4" class="t">4</text>
<line x1="194.0" y1="200.4" x2="198.0" y2="200.4" stroke="#d0d0d0" stroke-width="1"/>
<text x="179.2" y="204.3" class="t">2</text>
<line x1="194.0" y1="232.3" x2="198.0" y2="232.3" stroke="#d0d0d0" stroke-width="1"/>
<text x="179.2" y="236.2" class="t">0</text>
<line x1="194.0" y1="264.2" x2="198.0" y2="264.2" stroke="#d0d0d0" stroke-width="1"/>
<rect x="179.6" y="263.7" width="2.6" height="1.3" fill="#e0e0e0"/>
<text x="182.0" y="268.1" class="t">2</text>
<line x1="194.0" y1="296.1" x2="198.0" y2="296.1" stroke="#d0d0d0" stroke-width="1"/>
<rect x="179.6" y="295.6" width="2.6" height="1.3" fill="#e0e0e0"/>
<text x="182.0" y="300.0" class="t">4</text>
<line x1="194.0" y1="328.0" x2="198.0" y2="328.0" stroke="#d0d0d0" stroke-width="1"/>
<rect x="179.6" y="327.5" width="2.6" height="1.3" fill="#e0e0e0"/>
<text x="182.0" y="331.9" class="t">6</text>
<line x1="194.0" y1="359.9" x2="198.0" y2="359.9" stroke="#d0d0d0" stroke-width="1"/>
<rect x="179.6" y="359.4" width="2.6" height="1.3" fill="#e0e0e0"/>
<text x="182.0" y="363.8" class="t">8</text>
<line x1="194.0" y1="391.8" x2="198.0" y2="391.8" stroke="#d0d0d0" stroke-width="1"/>
<rect x="179.6" y="391.3" width="2.6" height="1.3" fill="#e0e0e0"/>
<text x="182.0" y="395.7" class="t">10</text>
<rect x="451.5" y="73" width="8.5" height="318.5" fill="url(#cb)"/>
<text x="461.0" y="83.5" class="t">23</text>
<text x="461.0" y="102.7" class="t">20</text>
<text x="461.0" y="122.5" class="t">17</text>
<text x="461.0" y="143.2" class="t">14</text>
<text x="461.0" y="162.8" class="t">11</text>
<text x="461.0" y="184.6" class="t">8</text>
<text x="461.0" y="206.3" class="t">5</text>
<text x="461.0" y="225.6" class="t">2</text>
<rect x="461.0" y="244.0" width="2.6" height="1.3" fill="#e0e0e0"/>
<text x="463.8" y="248.3" class="t">2</text>
<rect x="461.0" y="264.2" width="2.6" height="1.3" fill="#e0e0e0"/>
<text x="463.8" y="268.5" class="t">5</text>
<rect x="461.0" y="284.0" width="2.6" height="1.3" fill="#e0e0e0"/>
<text x="463.8" y="288.3" class="t">8</text>
<rect x="461.0" y="303.2" width="2.6" height="1.3" fill="#e0e0e0"/>
<text x="463.8" y="307.5" class="t">11</text>
<rect x="461.0" y="324.1" width="2.6" height="1.3" fill="#e0e0e0"/>
<text x="463.8" y="328.4" class="t">14</text>
<rect x="461.0" y="345.0" width="2.6" height="1.3" fill="#e0e0e0"/>
<text x="463.8" y="349.3" class="t">17</text>
<rect x="461.0" y="363.7" width="2.6" height="1.3" fill="#e0e0e0"/>
<text x="463.8" y="368.0" class="t">20</text>
<rect x="461.0" y="382.9" width="2.6" height="1.3" fill="#e0e0e0"/>
<text x="463.8" y="387.2" class="t">23</text>
<clipPath id="wcb"><path d="M686.2,226.9 L609.6,132.2 L607.6,128.8 L604.9,132.6 L602.4,136.6 L600.0,140.6 L597.7,144.8 L595.3,148.8 L592.5,152.5 L589.9,156.4 L587.3,160.4 L584.9,164.5 L582.8,168.9 L582.0,174.1 L581.4,179.3 L580.9,184.4 L580.6,189.5 L580.4,194.6 L580.3,199.6 L579.5,204.4 L578.9,209.2 L578.4,214.0 L578.1,218.9 L577.8,223.7 L577.7,228.5 L577.8,233.4 L577.9,238.2 L578.2,243.0 L578.6,247.8 L579.1,252.6 L579.8,257.4 L580.6,262.1 L581.4,266.8 L582.4,271.5 L583.4,276.1 L584.6,280.7 L586.0,285.3 L587.5,289.7 L589.2,294.0 L591.2,298.2 L593.3,302.2 L595.5,306.1 L597.9,310.0 L600.3,313.7 L602.9,317.2 L605.6,320.6 L606.3,327.1 L631.5,295.9 L649.8,274.0 L670.0,259.2 L693.2,261.9Z"/></clipPath><g clip-path="url(#wcb)">
<line x1="611.0" y1="318.6" x2="630.4" y2="301.9" stroke="#f0d840" stroke-width="1.8"/>
<line x1="631.1" y1="301.3" x2="649.5" y2="285.4" stroke="#f0d030" stroke-width="1.8"/>
<line x1="649.8" y1="285.2" x2="656.5" y2="279.4" stroke="#f0d020" stroke-width="1.8"/>
<line x1="610.4" y1="315.4" x2="619.3" y2="308.0" stroke="#f0cc30" stroke-width="1.8"/>
<line x1="620.4" y1="307.1" x2="637.0" y2="293.4" stroke="#f0c820" stroke-width="1.8"/>
<line x1="637.8" y1="292.7" x2="650.2" y2="282.4" stroke="#f0d840" stroke-width="1.8"/>
<line x1="651.1" y1="281.7" x2="656.6" y2="277.1" stroke="#f0d030" stroke-width="1.8"/>
<line x1="610.2" y1="311.9" x2="617.8" y2="305.9" stroke="#f0d030" stroke-width="1.8"/>
<line x1="618.6" y1="305.2" x2="636.6" y2="290.9" stroke="#e8c028" stroke-width="1.8"/>
<line x1="637.2" y1="290.4" x2="656.1" y2="275.3" stroke="#f0cc30" stroke-width="1.8"/>
<line x1="656.5" y1="275.0" x2="657.2" y2="274.5" stroke="#f0c820" stroke-width="1.8"/>
<line x1="606.0" y1="312.3" x2="627.5" y2="295.9" stroke="#e0b828" stroke-width="1.8"/>
<line x1="627.6" y1="295.9" x2="638.4" y2="287.6" stroke="#e0b828" stroke-width="1.8"/>
<line x1="638.7" y1="287.4" x2="650.0" y2="278.7" stroke="#f0c820" stroke-width="1.8"/>
<line x1="650.8" y1="278.1" x2="653.7" y2="275.9" stroke="#f0c820" stroke-width="1.8"/>
<line x1="604.8" y1="309.9" x2="624.3" y2="295.5" stroke="#f0c820" stroke-width="1.8"/>
<line x1="624.6" y1="295.3" x2="645.3" y2="280.1" stroke="#f0c820" stroke-width="1.8"/>
<line x1="646.0" y1="279.6" x2="653.1" y2="274.4" stroke="#f0d840" stroke-width="1.8"/>
<line x1="602.4" y1="308.3" x2="619.7" y2="296.1" stroke="#e8c028" stroke-width="1.8"/>
<line x1="619.9" y1="296.0" x2="632.1" y2="287.4" stroke="#f0d840" stroke-width="1.8"/>
<line x1="633.2" y1="286.6" x2="642.3" y2="280.2" stroke="#f0d030" stroke-width="1.8"/>
<line x1="643.4" y1="279.5" x2="650.9" y2="274.2" stroke="#f0d840" stroke-width="1.8"/>
<line x1="602.7" y1="304.5" x2="616.8" y2="295.0" stroke="#f0d030" stroke-width="1.8"/>
<line x1="618.3" y1="294.0" x2="637.3" y2="281.2" stroke="#f0d840" stroke-width="1.8"/>
<line x1="638.2" y1="280.6" x2="647.4" y2="274.4" stroke="#f0d840" stroke-width="1.8"/>
<line x1="648.9" y1="273.4" x2="652.5" y2="271.0" stroke="#e0b828" stroke-width="1.8"/>
<line x1="598.5" y1="304.4" x2="619.4" y2="290.9" stroke="#f0d030" stroke-width="1.8"/>
<line x1="619.7" y1="290.7" x2="642.3" y2="276.2" stroke="#f0cc30" stroke-width="1.8"/>
<line x1="643.3" y1="275.5" x2="648.9" y2="271.9" stroke="#f0d030" stroke-width="1.8"/>
<line x1="599.5" y1="300.1" x2="612.2" y2="292.2" stroke="#e8c028" stroke-width="1.8"/>
<line x1="612.8" y1="291.9" x2="621.6" y2="286.5" stroke="#f0d030" stroke-width="1.8"/>
<line x1="622.5" y1="285.9" x2="633.9" y2="278.9" stroke="#f0cc30" stroke-width="1.8"/>
<line x1="634.5" y1="278.6" x2="650.7" y2="268.7" stroke="#f0d030" stroke-width="1.8"/>
<line x1="597.1" y1="298.4" x2="618.4" y2="285.9" stroke="#f0d030" stroke-width="1.8"/>
<line x1="619.3" y1="285.4" x2="631.9" y2="278.0" stroke="#f0d030" stroke-width="1.8"/>
<line x1="633.2" y1="277.3" x2="644.9" y2="270.4" stroke="#f0d030" stroke-width="1.8"/>
<line x1="645.1" y1="270.3" x2="648.9" y2="268.1" stroke="#f0cc30" stroke-width="1.8"/>
<line x1="593.6" y1="297.3" x2="611.0" y2="287.7" stroke="#f0d840" stroke-width="1.8"/>
<line x1="611.1" y1="287.6" x2="620.6" y2="282.3" stroke="#f0cc30" stroke-width="1.8"/>
<line x1="622.2" y1="281.5" x2="633.8" y2="275.0" stroke="#f0d020" stroke-width="1.8"/>
<line x1="634.4" y1="274.6" x2="646.1" y2="268.1" stroke="#f0cc30" stroke-width="1.8"/>
<line x1="594.4" y1="293.4" x2="617.9" y2="281.0" stroke="#f0d030" stroke-width="1.8"/>
<line x1="618.3" y1="280.8" x2="635.1" y2="271.9" stroke="#e0b828" stroke-width="1.8"/>
<line x1="636.1" y1="271.3" x2="645.2" y2="266.5" stroke="#f0d030" stroke-width="1.8"/>
<line x1="646.7" y1="265.7" x2="647.4" y2="265.3" stroke="#f0c820" stroke-width="1.8"/>
<line x1="593.7" y1="290.5" x2="602.5" y2="286.1" stroke="#e8c028" stroke-width="1.8"/>
<line x1="603.1" y1="285.8" x2="620.3" y2="277.1" stroke="#f0d030" stroke-width="1.8"/>
<line x1="620.5" y1="277.1" x2="630.8" y2="271.9" stroke="#f0d840" stroke-width="1.8"/>
<line x1="632.3" y1="271.1" x2="647.3" y2="263.6" stroke="#f0d020" stroke-width="1.8"/>
<line x1="590.0" y1="289.4" x2="613.1" y2="278.4" stroke="#f0d840" stroke-width="1.8"/>
<line x1="614.6" y1="277.7" x2="634.1" y2="268.4" stroke="#f0c820" stroke-width="1.8"/>
<line x1="634.2" y1="268.4" x2="644.2" y2="263.6" stroke="#f0d840" stroke-width="1.8"/>
<line x1="592.1" y1="284.8" x2="601.5" y2="280.6" stroke="#f0d840" stroke-width="1.8"/>
<line x1="602.4" y1="280.2" x2="622.8" y2="271.1" stroke="#f0d020" stroke-width="1.8"/>
<line x1="624.0" y1="270.6" x2="634.3" y2="265.9" stroke="#e8c028" stroke-width="1.8"/>
<line x1="634.9" y1="265.7" x2="646.9" y2="260.3" stroke="#f0c820" stroke-width="1.8"/>
<line x1="590.7" y1="282.3" x2="613.4" y2="272.8" stroke="#f0cc30" stroke-width="1.8"/>
<line x1="613.4" y1="272.8" x2="632.7" y2="264.7" stroke="#f0d840" stroke-width="1.8"/>
<line x1="633.6" y1="264.3" x2="646.0" y2="259.0" stroke="#f0c820" stroke-width="1.8"/>
<line x1="591.4" y1="278.8" x2="606.7" y2="272.8" stroke="#e8c028" stroke-width="1.8"/>
<line x1="607.4" y1="272.5" x2="628.1" y2="264.3" stroke="#f0cc30" stroke-width="1.8"/>
<line x1="628.8" y1="264.0" x2="645.0" y2="257.7" stroke="#f0cc30" stroke-width="1.8"/>
<line x1="645.1" y1="257.6" x2="647.2" y2="256.8" stroke="#f0c820" stroke-width="1.8"/>
<line x1="595.7" y1="273.8" x2="620.3" y2="264.7" stroke="#f0c820" stroke-width="1.8"/>
<line x1="621.1" y1="264.4" x2="639.9" y2="257.5" stroke="#f0d840" stroke-width="1.8"/>
<line x1="640.4" y1="257.3" x2="649.0" y2="254.1" stroke="#e8c028" stroke-width="1.8"/>
<line x1="649.2" y1="254.0" x2="651.9" y2="253.0" stroke="#f0cc30" stroke-width="1.8"/>
<line x1="585.9" y1="274.9" x2="601.9" y2="269.4" stroke="#f0d030" stroke-width="1.8"/>
<line x1="602.5" y1="269.2" x2="622.3" y2="262.4" stroke="#f0d030" stroke-width="1.8"/>
<line x1="623.4" y1="262.0" x2="642.6" y2="255.4" stroke="#e0b828" stroke-width="1.8"/>
<line x1="585.3" y1="271.9" x2="603.9" y2="266.0" stroke="#e8c028" stroke-width="1.8"/>
<line x1="604.3" y1="265.9" x2="615.2" y2="262.4" stroke="#e8c028" stroke-width="1.8"/>
<line x1="616.6" y1="261.9" x2="639.7" y2="254.6" stroke="#f0d020" stroke-width="1.8"/>
<line x1="639.8" y1="254.6" x2="642.5" y2="253.7" stroke="#e0b828" stroke-width="1.8"/>
<line x1="586.9" y1="268.2" x2="599.2" y2="264.6" stroke="#f0d840" stroke-width="1.8"/>
<line x1="599.9" y1="264.4" x2="617.5" y2="259.2" stroke="#f0d020" stroke-width="1.8"/>
<line x1="618.1" y1="259.0" x2="641.2" y2="252.3" stroke="#f0cc30" stroke-width="1.8"/>
<line x1="642.0" y1="252.1" x2="644.5" y2="251.3" stroke="#f0c820" stroke-width="1.8"/>
<line x1="585.5" y1="265.5" x2="599.1" y2="261.9" stroke="#e8c028" stroke-width="1.8"/>
<line x1="599.6" y1="261.7" x2="622.1" y2="255.7" stroke="#f0c820" stroke-width="1.8"/>
<line x1="623.2" y1="255.4" x2="638.9" y2="251.2" stroke="#f0d030" stroke-width="1.8"/>
<line x1="639.0" y1="251.2" x2="643.5" y2="250.0" stroke="#f0d030" stroke-width="1.8"/>
<line x1="584.0" y1="262.9" x2="594.8" y2="260.2" stroke="#f0c820" stroke-width="1.8"/>
<line x1="595.9" y1="260.0" x2="616.1" y2="255.1" stroke="#e0b828" stroke-width="1.8"/>
<line x1="616.7" y1="254.9" x2="626.8" y2="252.5" stroke="#f0d030" stroke-width="1.8"/>
<line x1="627.2" y1="252.4" x2="642.3" y2="248.7" stroke="#f0d030" stroke-width="1.8"/>
<line x1="583.7" y1="259.8" x2="593.2" y2="257.8" stroke="#f0d030" stroke-width="1.8"/>
<line x1="593.6" y1="257.7" x2="608.5" y2="254.4" stroke="#f0d020" stroke-width="1.8"/>
<line x1="610.2" y1="254.1" x2="627.8" y2="250.2" stroke="#e0b828" stroke-width="1.8"/>
<line x1="628.1" y1="250.2" x2="642.4" y2="247.1" stroke="#f0d020" stroke-width="1.8"/>
<line x1="586.8" y1="256.0" x2="608.4" y2="251.9" stroke="#f0d030" stroke-width="1.8"/>
<line x1="609.2" y1="251.7" x2="621.5" y2="249.3" stroke="#f0c820" stroke-width="1.8"/>
<line x1="622.1" y1="249.2" x2="641.0" y2="245.6" stroke="#f0cc30" stroke-width="1.8"/>
<line x1="642.4" y1="245.3" x2="645.7" y2="244.7" stroke="#f0d840" stroke-width="1.8"/>
<line x1="586.9" y1="253.0" x2="611.2" y2="249.0" stroke="#e0b828" stroke-width="1.8"/>
<line x1="612.3" y1="248.8" x2="633.9" y2="245.1" stroke="#f0d030" stroke-width="1.8"/>
<line x1="634.4" y1="245.1" x2="646.1" y2="243.1" stroke="#f0c820" stroke-width="1.8"/>
<line x1="583.6" y1="250.7" x2="598.2" y2="248.6" stroke="#f0d020" stroke-width="1.8"/>
<line x1="599.7" y1="248.3" x2="614.8" y2="246.2" stroke="#f0c820" stroke-width="1.8"/>
<line x1="614.9" y1="246.2" x2="629.9" y2="244.0" stroke="#f0d840" stroke-width="1.8"/>
<line x1="631.3" y1="243.8" x2="643.0" y2="242.1" stroke="#f0c820" stroke-width="1.8"/>
<line x1="581.5" y1="247.9" x2="591.0" y2="246.8" stroke="#f0cc30" stroke-width="1.8"/>
<line x1="591.6" y1="246.7" x2="614.7" y2="244.0" stroke="#f0d030" stroke-width="1.8"/>
<line x1="615.5" y1="243.9" x2="641.0" y2="240.8" stroke="#f0d020" stroke-width="1.8"/>
<line x1="582.2" y1="244.8" x2="606.9" y2="242.4" stroke="#f0cc30" stroke-width="1.8"/>
<line x1="608.6" y1="242.3" x2="619.1" y2="241.3" stroke="#f0d030" stroke-width="1.8"/>
<line x1="619.9" y1="241.2" x2="638.9" y2="239.4" stroke="#e0b828" stroke-width="1.8"/>
<line x1="640.2" y1="239.3" x2="641.9" y2="239.1" stroke="#f0cc30" stroke-width="1.8"/>
<line x1="580.7" y1="241.9" x2="601.8" y2="240.4" stroke="#e0b828" stroke-width="1.8"/>
<line x1="603.3" y1="240.3" x2="623.3" y2="238.8" stroke="#e8c028" stroke-width="1.8"/>
<line x1="624.8" y1="238.7" x2="640.6" y2="237.6" stroke="#f0cc30" stroke-width="1.8"/>
<line x1="582.8" y1="238.7" x2="593.8" y2="238.2" stroke="#f0c820" stroke-width="1.8"/>
<line x1="594.9" y1="238.1" x2="604.4" y2="237.7" stroke="#f0c820" stroke-width="1.8"/>
<line x1="605.3" y1="237.6" x2="621.5" y2="236.9" stroke="#e0b828" stroke-width="1.8"/>
<line x1="623.3" y1="236.8" x2="634.5" y2="236.3" stroke="#f0c820" stroke-width="1.8"/>
<line x1="635.7" y1="236.2" x2="642.7" y2="235.9" stroke="#f0cc30" stroke-width="1.8"/>
<line x1="580.4" y1="235.7" x2="596.7" y2="235.4" stroke="#f0d030" stroke-width="1.8"/>
<line x1="597.5" y1="235.4" x2="608.8" y2="235.1" stroke="#f0d840" stroke-width="1.8"/>
<line x1="610.4" y1="235.1" x2="636.2" y2="234.5" stroke="#f0d840" stroke-width="1.8"/>
<line x1="637.2" y1="234.5" x2="640.4" y2="234.4" stroke="#f0d840" stroke-width="1.8"/>
<line x1="580.3" y1="232.7" x2="603.3" y2="232.7" stroke="#f0c820" stroke-width="1.8"/>
<line x1="603.4" y1="232.7" x2="615.2" y2="232.7" stroke="#f0c820" stroke-width="1.8"/>
<line x1="616.4" y1="232.7" x2="631.2" y2="232.8" stroke="#e8c028" stroke-width="1.8"/>
<line x1="631.7" y1="232.8" x2="640.3" y2="232.8" stroke="#f0d840" stroke-width="1.8"/>
<line x1="584.6" y1="229.7" x2="598.1" y2="230.1" stroke="#f0d030" stroke-width="1.8"/>
<line x1="599.4" y1="230.1" x2="624.2" y2="230.8" stroke="#f0c820" stroke-width="1.8"/>
<line x1="624.8" y1="230.8" x2="641.3" y2="231.2" stroke="#f0cc30" stroke-width="1.8"/>
<line x1="642.4" y1="231.2" x2="644.6" y2="231.3" stroke="#e0b828" stroke-width="1.8"/>
<line x1="581.8" y1="226.6" x2="606.1" y2="227.8" stroke="#f0cc30" stroke-width="1.8"/>
<line x1="607.2" y1="227.9" x2="618.6" y2="228.5" stroke="#f0d020" stroke-width="1.8"/>
<line x1="619.8" y1="228.5" x2="635.0" y2="229.3" stroke="#f0d030" stroke-width="1.8"/>
<line x1="635.6" y1="229.3" x2="641.8" y2="229.6" stroke="#f0d030" stroke-width="1.8"/>
<line x1="580.0" y1="223.4" x2="591.4" y2="224.3" stroke="#f0d030" stroke-width="1.8"/>
<line x1="591.6" y1="224.3" x2="602.2" y2="225.1" stroke="#f0d840" stroke-width="1.8"/>
<line x1="602.3" y1="225.1" x2="626.3" y2="226.9" stroke="#f0d840" stroke-width="1.8"/>
<line x1="627.2" y1="226.9" x2="639.8" y2="227.9" stroke="#f0d030" stroke-width="1.8"/>
<line x1="587.1" y1="221.1" x2="599.7" y2="222.4" stroke="#f0d020" stroke-width="1.8"/>
<line x1="600.3" y1="222.4" x2="624.0" y2="224.8" stroke="#e8c028" stroke-width="1.8"/>
<line x1="624.2" y1="224.8" x2="642.2" y2="226.6" stroke="#e0b828" stroke-width="1.8"/>
<line x1="642.8" y1="226.6" x2="646.8" y2="227.0" stroke="#e0b828" stroke-width="1.8"/>
<line x1="590.4" y1="218.7" x2="600.0" y2="219.9" stroke="#f0cc30" stroke-width="1.8"/>
<line x1="601.1" y1="220.0" x2="626.2" y2="223.1" stroke="#f0d840" stroke-width="1.8"/>
<line x1="626.5" y1="223.1" x2="638.7" y2="224.6" stroke="#f0d030" stroke-width="1.8"/>
<line x1="639.0" y1="224.7" x2="650.0" y2="226.0" stroke="#e8c028" stroke-width="1.8"/>
<line x1="590.5" y1="215.9" x2="616.4" y2="219.7" stroke="#f0d840" stroke-width="1.8"/>
<line x1="616.5" y1="219.7" x2="627.1" y2="221.3" stroke="#f0d840" stroke-width="1.8"/>
<line x1="628.0" y1="221.4" x2="646.1" y2="224.1" stroke="#f0d840" stroke-width="1.8"/>
<line x1="646.4" y1="224.1" x2="649.9" y2="224.6" stroke="#f0d020" stroke-width="1.8"/>
<line x1="581.7" y1="211.2" x2="598.6" y2="214.2" stroke="#f0d020" stroke-width="1.8"/>
<line x1="599.3" y1="214.3" x2="624.5" y2="218.6" stroke="#f0cc30" stroke-width="1.8"/>
<line x1="624.8" y1="218.7" x2="640.8" y2="221.4" stroke="#f0c820" stroke-width="1.8"/>
<line x1="586.1" y1="209.1" x2="610.4" y2="213.9" stroke="#f0d020" stroke-width="1.8"/>
<line x1="612.0" y1="214.2" x2="630.9" y2="218.0" stroke="#f0d030" stroke-width="1.8"/>
<line x1="631.8" y1="218.1" x2="644.9" y2="220.7" stroke="#e0b828" stroke-width="1.8"/>
<line x1="590.6" y1="207.3" x2="612.4" y2="212.1" stroke="#f0d030" stroke-width="1.8"/>
<line x1="613.9" y1="212.5" x2="629.8" y2="216.0" stroke="#e8c028" stroke-width="1.8"/>
<line x1="631.3" y1="216.3" x2="649.2" y2="220.3" stroke="#e0b828" stroke-width="1.8"/>
<line x1="586.4" y1="203.2" x2="598.4" y2="206.1" stroke="#e0b828" stroke-width="1.8"/>
<line x1="599.0" y1="206.3" x2="615.9" y2="210.4" stroke="#f0c820" stroke-width="1.8"/>
<line x1="617.5" y1="210.8" x2="643.5" y2="217.2" stroke="#f0cc30" stroke-width="1.8"/>
<line x1="643.6" y1="217.2" x2="644.7" y2="217.5" stroke="#f0d020" stroke-width="1.8"/>
<line x1="586.6" y1="200.1" x2="598.4" y2="203.4" stroke="#f0c820" stroke-width="1.8"/>
<line x1="599.1" y1="203.5" x2="625.1" y2="210.6" stroke="#f0d020" stroke-width="1.8"/>
<line x1="625.5" y1="210.7" x2="636.3" y2="213.6" stroke="#f0d840" stroke-width="1.8"/>
<line x1="638.0" y1="214.1" x2="644.5" y2="215.9" stroke="#f0cc30" stroke-width="1.8"/>
<line x1="586.5" y1="197.0" x2="603.8" y2="202.1" stroke="#e0b828" stroke-width="1.8"/>
<line x1="604.2" y1="202.2" x2="619.3" y2="206.7" stroke="#f0c820" stroke-width="1.8"/>
<line x1="619.7" y1="206.9" x2="633.1" y2="210.8" stroke="#e8c028" stroke-width="1.8"/>
<line x1="634.0" y1="211.1" x2="644.0" y2="214.1" stroke="#f0cc30" stroke-width="1.8"/>
<line x1="582.6" y1="192.4" x2="605.0" y2="199.6" stroke="#f0c820" stroke-width="1.8"/>
<line x1="606.0" y1="199.9" x2="626.0" y2="206.3" stroke="#f0c820" stroke-width="1.8"/>
<line x1="626.7" y1="206.6" x2="639.7" y2="210.8" stroke="#f0d840" stroke-width="1.8"/>
<line x1="587.1" y1="190.9" x2="606.0" y2="197.5" stroke="#f0c820" stroke-width="1.8"/>
<line x1="606.7" y1="197.7" x2="623.6" y2="203.6" stroke="#e8c028" stroke-width="1.8"/>
<line x1="624.5" y1="203.9" x2="643.2" y2="210.4" stroke="#e8c028" stroke-width="1.8"/>
<line x1="585.6" y1="187.1" x2="609.7" y2="196.0" stroke="#f0d020" stroke-width="1.8"/>
<line x1="610.9" y1="196.5" x2="624.4" y2="201.5" stroke="#f0c820" stroke-width="1.8"/>
<line x1="625.7" y1="202.0" x2="641.8" y2="208.0" stroke="#f0d020" stroke-width="1.8"/>
<line x1="584.5" y1="183.2" x2="607.8" y2="192.5" stroke="#f0d020" stroke-width="1.8"/>
<line x1="608.5" y1="192.8" x2="626.6" y2="200.0" stroke="#f0d020" stroke-width="1.8"/>
<line x1="628.2" y1="200.6" x2="637.8" y2="204.5" stroke="#f0d030" stroke-width="1.8"/>
<line x1="638.5" y1="204.7" x2="640.2" y2="205.4" stroke="#e0b828" stroke-width="1.8"/>
<line x1="586.0" y1="180.6" x2="606.3" y2="189.2" stroke="#f0d840" stroke-width="1.8"/>
<line x1="606.5" y1="189.3" x2="630.7" y2="199.6" stroke="#f0d030" stroke-width="1.8"/>
<line x1="631.7" y1="200.0" x2="641.2" y2="204.0" stroke="#f0cc30" stroke-width="1.8"/>
<line x1="588.5" y1="178.5" x2="602.6" y2="184.8" stroke="#f0d030" stroke-width="1.8"/>
<line x1="602.8" y1="184.9" x2="618.2" y2="191.9" stroke="#f0d020" stroke-width="1.8"/>
<line x1="618.9" y1="192.2" x2="637.0" y2="200.4" stroke="#f0d020" stroke-width="1.8"/>
<line x1="637.9" y1="200.8" x2="643.2" y2="203.2" stroke="#e0b828" stroke-width="1.8"/>
<line x1="585.4" y1="173.3" x2="598.2" y2="179.4" stroke="#f0d030" stroke-width="1.8"/>
<line x1="598.6" y1="179.6" x2="608.6" y2="184.4" stroke="#e8c028" stroke-width="1.8"/>
<line x1="609.8" y1="185.0" x2="628.1" y2="193.7" stroke="#e8c028" stroke-width="1.8"/>
<line x1="628.5" y1="193.9" x2="639.5" y2="199.2" stroke="#f0d020" stroke-width="1.8"/>
<line x1="587.1" y1="170.7" x2="607.2" y2="180.9" stroke="#f0d030" stroke-width="1.8"/>
<line x1="608.7" y1="181.7" x2="624.8" y2="189.8" stroke="#f0d020" stroke-width="1.8"/>
<line x1="626.3" y1="190.5" x2="640.6" y2="197.8" stroke="#f0c820" stroke-width="1.8"/>
<line x1="591.4" y1="169.9" x2="599.8" y2="174.4" stroke="#f0c820" stroke-width="1.8"/>
<line x1="600.0" y1="174.5" x2="616.5" y2="183.3" stroke="#f0c820" stroke-width="1.8"/>
<line x1="617.7" y1="184.0" x2="640.2" y2="195.9" stroke="#f0d030" stroke-width="1.8"/>
<line x1="641.0" y1="196.4" x2="644.4" y2="198.2" stroke="#e8c028" stroke-width="1.8"/>
<line x1="591.2" y1="166.2" x2="606.8" y2="175.0" stroke="#f0d030" stroke-width="1.8"/>
<line x1="608.1" y1="175.7" x2="617.1" y2="180.8" stroke="#f0c820" stroke-width="1.8"/>
<line x1="617.8" y1="181.2" x2="638.6" y2="192.8" stroke="#e0b828" stroke-width="1.8"/>
<line x1="639.8" y1="193.5" x2="643.5" y2="195.6" stroke="#f0d840" stroke-width="1.8"/>
<line x1="592.5" y1="163.6" x2="602.7" y2="169.5" stroke="#e0b828" stroke-width="1.8"/>
<line x1="604.2" y1="170.4" x2="617.0" y2="178.0" stroke="#f0cc30" stroke-width="1.8"/>
<line x1="618.2" y1="178.7" x2="638.7" y2="190.8" stroke="#f0d030" stroke-width="1.8"/>
<line x1="639.4" y1="191.2" x2="644.2" y2="194.0" stroke="#f0c820" stroke-width="1.8"/>
<line x1="594.4" y1="161.3" x2="608.7" y2="170.1" stroke="#f0cc30" stroke-width="1.8"/>
<line x1="609.4" y1="170.6" x2="627.6" y2="181.8" stroke="#e8c028" stroke-width="1.8"/>
<line x1="628.8" y1="182.6" x2="636.6" y2="187.4" stroke="#e8c028" stroke-width="1.8"/>
<line x1="637.0" y1="187.6" x2="645.4" y2="192.9" stroke="#f0c820" stroke-width="1.8"/>
<line x1="595.2" y1="158.3" x2="607.7" y2="166.4" stroke="#f0d030" stroke-width="1.8"/>
<line x1="608.1" y1="166.6" x2="625.5" y2="177.9" stroke="#e8c028" stroke-width="1.8"/>
<line x1="626.1" y1="178.3" x2="635.4" y2="184.3" stroke="#f0d020" stroke-width="1.8"/>
<line x1="636.1" y1="184.7" x2="645.6" y2="190.9" stroke="#f0d020" stroke-width="1.8"/>
<line x1="597.1" y1="156.1" x2="609.1" y2="164.2" stroke="#e8c028" stroke-width="1.8"/>
<line x1="609.5" y1="164.4" x2="631.3" y2="179.2" stroke="#f0d020" stroke-width="1.8"/>
<line x1="632.7" y1="180.2" x2="643.8" y2="187.7" stroke="#e8c028" stroke-width="1.8"/>
<line x1="645.1" y1="188.5" x2="646.8" y2="189.7" stroke="#f0d020" stroke-width="1.8"/>
<line x1="599.1" y1="154.0" x2="614.7" y2="165.0" stroke="#e0b828" stroke-width="1.8"/>
<line x1="615.3" y1="165.4" x2="624.9" y2="172.2" stroke="#f0cc30" stroke-width="1.8"/>
<line x1="625.7" y1="172.8" x2="635.7" y2="179.9" stroke="#e0b828" stroke-width="1.8"/>
<line x1="636.3" y1="180.3" x2="648.0" y2="188.6" stroke="#e0b828" stroke-width="1.8"/>
<line x1="600.2" y1="151.2" x2="615.7" y2="162.6" stroke="#f0c820" stroke-width="1.8"/>
<line x1="616.6" y1="163.3" x2="635.5" y2="177.2" stroke="#f0c820" stroke-width="1.8"/>
<line x1="636.3" y1="177.8" x2="648.0" y2="186.5" stroke="#f0cc30" stroke-width="1.8"/>
<line x1="648.1" y1="186.5" x2="648.5" y2="186.8" stroke="#f0d020" stroke-width="1.8"/>
<line x1="606.8" y1="153.6" x2="623.2" y2="166.3" stroke="#f0c820" stroke-width="1.8"/>
<line x1="624.3" y1="167.1" x2="640.7" y2="179.7" stroke="#f0d030" stroke-width="1.8"/>
<line x1="641.7" y1="180.5" x2="654.3" y2="190.2" stroke="#f0cc30" stroke-width="1.8"/>
<line x1="603.2" y1="146.2" x2="621.6" y2="160.9" stroke="#e8c028" stroke-width="1.8"/>
<line x1="622.5" y1="161.7" x2="636.5" y2="172.9" stroke="#f0cc30" stroke-width="1.8"/>
<line x1="637.6" y1="173.8" x2="645.7" y2="180.2" stroke="#f0cc30" stroke-width="1.8"/>
<line x1="646.9" y1="181.3" x2="650.0" y2="183.7" stroke="#e0b828" stroke-width="1.8"/>
<line x1="609.3" y1="148.6" x2="621.4" y2="158.7" stroke="#f0c820" stroke-width="1.8"/>
<line x1="622.7" y1="159.8" x2="642.8" y2="176.6" stroke="#f0d020" stroke-width="1.8"/>
<line x1="642.9" y1="176.6" x2="654.8" y2="186.5" stroke="#f0c820" stroke-width="1.8"/>
<line x1="606.4" y1="141.3" x2="615.1" y2="149.0" stroke="#f0d020" stroke-width="1.8"/>
<line x1="615.4" y1="149.2" x2="630.8" y2="162.6" stroke="#f0d020" stroke-width="1.8"/>
<line x1="631.0" y1="162.8" x2="640.6" y2="171.1" stroke="#f0d840" stroke-width="1.8"/>
<line x1="641.3" y1="171.7" x2="651.7" y2="180.7" stroke="#f0c820" stroke-width="1.8"/>
<line x1="606.6" y1="137.4" x2="615.4" y2="145.3" stroke="#f0d030" stroke-width="1.8"/>
<line x1="616.6" y1="146.4" x2="633.4" y2="161.5" stroke="#f0c820" stroke-width="1.8"/>
<line x1="634.1" y1="162.2" x2="651.2" y2="177.6" stroke="#f0c820" stroke-width="1.8"/>
</g>
<path d="M686.8,227.9 L609.9,131.8 L607.7,139.3 L615.5,156.9 L626.8,182.9 L626.3,191.6 L623.6,196.8 L620.9,202.1 L619.3,208.1 L618.6,214.3 L617.6,220.4 L617.3,226.7 L615.4,232.9 L617.5,239.1 L616.1,245.6 L615.5,252.3 L616.6,258.7 L615.9,266.0 L618.0,272.1 L618.1,279.7 L621.0,285.7 L623.2,292.2 L625.5,296.7 L632.2,292.0 L625.6,300.4 L631.1,292.7 L636.3,290.6 L640.4,283.8 L647.1,280.3 L652.1,276.7 L657.1,269.6 L662.5,269.1 L667.4,263.1 L672.1,260.1 L678.0,260.0 L684.0,260.7 L685.2,259.9 L692.2,261.9 L692.2,234.9Z" fill="#f0d418"/>
<path d="M625.6,300.4 L631.1,292.7 L636.3,290.6 L640.4,283.8 L647.1,280.3 L652.1,276.7 L657.1,269.6 L662.5,269.1 L667.4,263.1 L672.1,260.1 L678.0,260.0 L684.0,260.7" fill="none" stroke="#d0a830" stroke-width="3" stroke-opacity="0.8"/>
<path d="M686.8,227.9 L609.9,131.8 L607.3,142.1 L613.4,160.1 L635.8,188.8 L658.6,219.4 L684.2,234.9 L692.2,234.9Z" fill="#d8b860" opacity="0.35"/>
<ellipse cx="644.2" cy="242.9" rx="36" ry="30" fill="#f4d400" opacity="0.3"/>
<rect x="686.2" y="247.9" width="6" height="14" fill="#a8a8c0"/>
<rect x="685.2" y="260.9" width="6" height="7" fill="#10a028"/>
<rect x="662.2" y="239.9" width="3" height="3" fill="#302000"/>
<rect x="650.2" y="230.9" width="2" height="2" fill="#806010"/>
<ellipse cx="688.25" cy="232.90" rx="23.48" ry="29.46" fill="none" stroke="#c8c8c8" stroke-width="1"/>
<ellipse cx="688.25" cy="232.90" rx="46.71" ry="58.61" fill="none" stroke="#c8c8c8" stroke-width="1"/>
<ellipse cx="688.25" cy="232.90" rx="69.19" ry="86.80" fill="none" stroke="#c8c8c8" stroke-width="1"/>
<ellipse cx="688.25" cy="232.90" rx="91.91" ry="115.32" fill="none" stroke="#c8c8c8" stroke-width="1"/>
<ellipse cx="688.25" cy="232.90" rx="126.25" ry="158.40" fill="none" stroke="#c8c8c8" stroke-width="1"/>
<line x1="767.7" y1="192.3" x2="686.4" y2="228.0" stroke="#d0d0d0" stroke-width="1.3"/>
<line x1="686.4" y1="228.0" x2="586.0" y2="272.0" stroke="#f0f0d0" stroke-opacity="0.4" stroke-width="1.3"/>
<line x1="769.3" y1="212.6" x2="690.5" y2="247.5" stroke="#d0d0d0" stroke-width="1.3"/>
<line x1="690.5" y1="247.5" x2="604.0" y2="285.8" stroke="#f0f0d0" stroke-opacity="0.4" stroke-width="1.3"/>
<rect x="562.0" y="74.5" width="252.5" height="316.8" fill="none" stroke="#d0d0d0" stroke-width="1.2"/>
<line x1="558.0" y1="72.8" x2="562.0" y2="72.8" stroke="#d0d0d0" stroke-width="1"/>
<text x="542.2" y="76.7" class="t">10</text>
<line x1="558.0" y1="104.7" x2="562.0" y2="104.7" stroke="#d0d0d0" stroke-width="1"/>
<text x="542.2" y="108.6" class="t">8</text>
<line x1="558.0" y1="136.6" x2="562.0" y2="136.6" stroke="#d0d0d0" stroke-width="1"/>
<text x="542.2" y="140.5" class="t">6</text>
<line x1="558.0" y1="168.5" x2="562.0" y2="168.5" stroke="#d0d0d0" stroke-width="1"/>
<text x="542.2" y="172.4" class="t">4</text>
<line x1="558.0" y1="200.4" x2="562.0" y2="200.4" stroke="#d0d0d0" stroke-width="1"/>
<text x="542.2" y="204.3" class="t">2</text>
<line x1="558.0" y1="232.3" x2="562.0" y2="232.3" stroke="#d0d0d0" stroke-width="1"/>
<text x="542.2" y="236.2" class="t">0</text>
<line x1="558.0" y1="264.2" x2="562.0" y2="264.2" stroke="#d0d0d0" stroke-width="1"/>
<rect x="541.8" y="263.7" width="2.6" height="1.3" fill="#e0e0e0"/>
<text x="545.0" y="268.1" class="t">2</text>
<line x1="558.0" y1="296.1" x2="562.0" y2="296.1" stroke="#d0d0d0" stroke-width="1"/>
<rect x="541.8" y="295.6" width="2.6" height="1.3" fill="#e0e0e0"/>
<text x="545.0" y="300.0" class="t">4</text>
<line x1="558.0" y1="328.0" x2="562.0" y2="328.0" stroke="#d0d0d0" stroke-width="1"/>
<rect x="541.8" y="327.5" width="2.6" height="1.3" fill="#e0e0e0"/>
<text x="545.0" y="331.9" class="t">6</text>
<line x1="558.0" y1="359.9" x2="562.0" y2="359.9" stroke="#d0d0d0" stroke-width="1"/>
<rect x="541.8" y="359.4" width="2.6" height="1.3" fill="#e0e0e0"/>
<text x="545.0" y="363.8" class="t">8</text>
<line x1="558.0" y1="391.8" x2="562.0" y2="391.8" stroke="#d0d0d0" stroke-width="1"/>
<rect x="541.8" y="391.3" width="2.6" height="1.3" fill="#e0e0e0"/>
<text x="545.0" y="395.7" class="t">10</text>
<rect x="815.3" y="73" width="7.5" height="318.5" fill="url(#cb)"/>
<text x="824.3" y="83.5" class="t">23</text>
<text x="824.3" y="102.7" class="t">20</text>
<text x="824.3" y="122.5" class="t">17</text>
<text x="824.3" y="143.2" class="t">14</text>
<text x="824.3" y="162.8" class="t">11</text>
<text x="824.3" y="184.6" class="t">8</text>
<text x="824.3" y="206.3" class="t">5</text>
<text x="824.3" y="225.6" class="t">2</text>
<rect x="824.3" y="244.0" width="2.6" height="1.3" fill="#e0e0e0"/>
<text x="827.1" y="248.3" class="t">2</text>
<rect x="824.3" y="264.2" width="2.6" height="1.3" fill="#e0e0e0"/>
<text x="827.1" y="268.5" class="t">5</text>
<rect x="824.3" y="284.0" width="2.6" height="1.3" fill="#e0e0e0"/>
<text x="827.1" y="288.3" class="t">8</text>
<rect x="824.3" y="303.2" width="2.6" height="1.3" fill="#e0e0e0"/>
<text x="827.1" y="307.5" class="t">11</text>
<rect x="824.3" y="324.1" width="2.6" height="1.3" fill="#e0e0e0"/>
<text x="827.1" y="328.4" class="t">14</text>
<rect x="824.3" y="345.0" width="2.6" height="1.3" fill="#e0e0e0"/>
<text x="827.1" y="349.3" class="t">17</text>
<rect x="824.3" y="363.7" width="2.6" height="1.3" fill="#e0e0e0"/>
<text x="827.1" y="368.0" class="t">20</text>
<rect x="824.3" y="382.9" width="2.6" height="1.3" fill="#e0e0e0"/>
<text x="827.1" y="387.2" class="t">23</text>
<text x="197.1" y="64" class="h">PPI scan</text>
<text x="304.5" y="64" class="h">2007/03/01 15:45:18</text>
<text x="415.3" y="66" class="h" letter-spacing="-0.1">Velocity (m/s)</text>
<text x="523.5" y="64" class="h">PPI scan</text>
<text x="631.5" y="64" class="h">2007/03/01 15:45:18</text>
<text x="815.5" y="66" class="h" letter-spacing="-0.1">Velocity (m/s)</text>
</svg>
</body></html>
